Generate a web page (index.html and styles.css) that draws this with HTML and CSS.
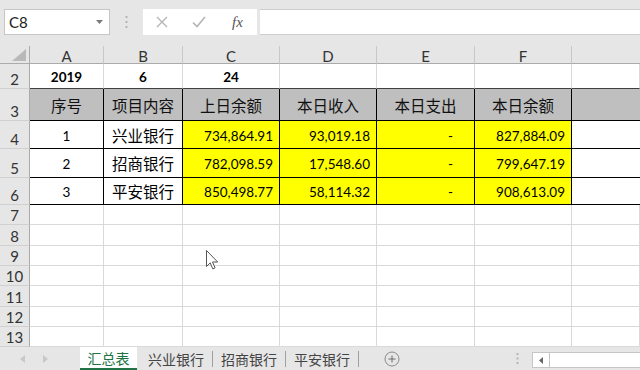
FILE: index.html
```html
<!DOCTYPE html>
<html lang="zh-CN">
  <head>
    <meta charset="UTF-8" />
    <title>汇总表</title>
    <link rel="stylesheet" href="styles.css">
  </head>
  <body>
    <div class="app">
      <!-- formula bar -->
      <div class="formula-bar">
        <div class="name-box">
          <span>C8</span>
          <svg class="caret" width="7" height="4" viewBox="0 0 7 4"><path d="M0 0h7L3.5 4z" fill="#7a7a7a"/></svg>
        </div>
        <div class="fb-dots">
          <svg width="3" height="12" viewBox="0 0 3 12"><rect x="0.5" y="0" width="2" height="2" fill="#b5b5b5"/><rect x="0.5" y="5" width="2" height="2" fill="#b5b5b5"/><rect x="0.5" y="10" width="2" height="2" fill="#b5b5b5"/></svg>
        </div>
        <div class="fb-icons">
          <svg width="12" height="12" viewBox="0 0 12 12"><path d="M1 1l10 10M11 1L1 11" stroke="#b4b4b4" stroke-width="1.3" fill="none"/></svg>
          <svg width="14" height="12" viewBox="0 0 14 12"><path d="M1 6.5l4 4L13 1" stroke="#b4b4b4" stroke-width="1.6" fill="none"/></svg>
          <span class="fx">fx</span>
        </div>
        <div class="fb-input"></div>
      </div>

      <!-- sheet grid -->
      <div class="sheet">
        <div class="corner"><svg width="14" height="12" viewBox="0 0 14 12"><path d="M14 0v12H0z" fill="#b9b9b9"/></svg></div>
        <div class="col-h">A</div>
        <div class="col-h">B</div>
        <div class="col-h">C</div>
        <div class="col-h">D</div>
        <div class="col-h">E</div>
        <div class="col-h">F</div>
        <div class="col-h last"></div>

        <div class="row-h">2</div>
        <div class="cell ctr bold top-line">2019</div>
        <div class="cell ctr bold top-line">6</div>
        <div class="cell ctr bold top-line">24</div>
        <div class="cell top-line"></div>
        <div class="cell top-line"></div>
        <div class="cell top-line"></div>
        <div class="cell top-line"></div>

        <div class="row-h">3</div>
        <div class="cell hd bx">序号</div>
        <div class="cell hd bx">项目内容</div>
        <div class="cell hd bx">上日余额</div>
        <div class="cell hd bx">本日收入</div>
        <div class="cell hd bx">本日支出</div>
        <div class="cell hd bx">本日余额</div>
        <div class="cell hd bb"></div>

        <div class="row-h">4</div>
        <div class="cell ctr bx">1</div>
        <div class="cell cn bx">兴业银行</div>
        <div class="cell num yl bx">734,864.91</div>
        <div class="cell num yl bx">93,019.18</div>
        <div class="cell dash yl bx">-</div>
        <div class="cell num yl bx">827,884.09</div>
        <div class="cell bb"></div>

        <div class="row-h">5</div>
        <div class="cell ctr bx">2</div>
        <div class="cell cn bx">招商银行</div>
        <div class="cell num yl bx">782,098.59</div>
        <div class="cell num yl bx">17,548.60</div>
        <div class="cell dash yl bx">-</div>
        <div class="cell num yl bx">799,647.19</div>
        <div class="cell bb"></div>

        <div class="row-h">6</div>
        <div class="cell ctr bx">3</div>
        <div class="cell cn bx">平安银行</div>
        <div class="cell num yl bx">850,498.77</div>
        <div class="cell num yl bx">58,114.32</div>
        <div class="cell dash yl bx">-</div>
        <div class="cell num yl bx">908,613.09</div>
        <div class="cell bb"></div>

        <div class="row-h">7</div>
        <div class="cell"></div><div class="cell"></div><div class="cell"></div><div class="cell"></div><div class="cell"></div><div class="cell"></div><div class="cell"></div>
        <div class="row-h">8</div>
        <div class="cell"></div><div class="cell"></div><div class="cell"></div><div class="cell"></div><div class="cell"></div><div class="cell"></div><div class="cell"></div>
        <div class="row-h">9</div>
        <div class="cell"></div><div class="cell"></div><div class="cell"></div><div class="cell"></div><div class="cell"></div><div class="cell"></div><div class="cell"></div>
        <div class="row-h">10</div>
        <div class="cell"></div><div class="cell"></div><div class="cell"></div><div class="cell"></div><div class="cell"></div><div class="cell"></div><div class="cell"></div>
        <div class="row-h">11</div>
        <div class="cell"></div><div class="cell"></div><div class="cell"></div><div class="cell"></div><div class="cell"></div><div class="cell"></div><div class="cell"></div>
        <div class="row-h">12</div>
        <div class="cell"></div><div class="cell"></div><div class="cell"></div><div class="cell"></div><div class="cell"></div><div class="cell"></div><div class="cell"></div>
        <div class="row-h">13</div>
        <div class="cell"></div><div class="cell"></div><div class="cell"></div><div class="cell"></div><div class="cell"></div><div class="cell"></div><div class="cell"></div>
      </div>

      <!-- sheet tabs -->
      <div class="tab-bar">
        <div class="tab-nav">
          <svg width="5" height="8" viewBox="0 0 5 8"><path d="M5 0v8L0 4z" fill="#c8c8c8"/></svg>
          <svg width="5" height="8" viewBox="0 0 5 8"><path d="M0 0v8l5-4z" fill="#c8c8c8"/></svg>
        </div>
        <div class="tab active">汇总表</div>
        <div class="tab">兴业银行</div>
        <div class="tab-sep"></div>
        <div class="tab">招商银行</div>
        <div class="tab-sep"></div>
        <div class="tab">平安银行</div>
        <div class="tab-sep"></div>
        <div class="tab-add">
          <svg width="16" height="16" viewBox="0 0 16 16"><circle cx="8" cy="8" r="7" stroke="#8a8a8a" fill="none"/><path d="M8 4.5v7M4.5 8h7" stroke="#6a6a6a"/></svg>
        </div>
        <div class="tab-dots">
          <svg width="3" height="11" viewBox="0 0 3 11"><rect x="0.5" y="0" width="2" height="2" fill="#b5b5b5"/><rect x="0.5" y="4.5" width="2" height="2" fill="#b5b5b5"/><rect x="0.5" y="9" width="2" height="2" fill="#b5b5b5"/></svg>
        </div>
        <div class="hscroll">
          <div class="hs-btn"><svg width="4" height="7" viewBox="0 0 4 7"><path d="M4 0v7L0 3.5z" fill="#666"/></svg></div>
        </div>
      </div>

      <!-- mouse pointer over the grid -->
      <svg class="pointer" width="13" height="20" viewBox="0 0 13 20">
        <path d="M0.5 0.5v16l3.7-3.6 2.6 6 2.3-1-2.6-5.9h5.2z" fill="#fff" stroke="#555" stroke-width="1"/>
      </svg>
    </div>
  </body>
</html>
```

FILE: styles.css
```css
body {
  margin: 0;
  background-color: #e6e6e6;
  font-family: Lato, "Noto Sans CJK SC", sans-serif;
  color: #000;
  overflow: hidden;
}
.app {
  position: relative;
  width: 640px;
  height: 370px;
  overflow: hidden;
  background-color: #e6e6e6;
}
.formula-bar {
  height: 46px;
  display: flex;
  align-items: flex-start;
  padding-top: 9px;
  box-sizing: border-box;
}
.name-box {
  margin-left: 4px;
  width: 106px;
  height: 26px;
  box-sizing: border-box;
  background-color: #fff;
  border: 1px solid #c6c6c6;
  display: flex;
  align-items: center;
  justify-content: space-between;
  padding: 0 6px 0 4px;
  font-size: 15px;
  color: #222;
}
.fb-dots {
  width: 33px;
  height: 26px;
  display: flex;
  align-items: center;
  justify-content: center;
}
.fb-icons {
  width: 114px;
  height: 26px;
  background-color: #fff;
  display: flex;
  align-items: center;
  gap: 24px;
  padding-left: 13px;
  box-sizing: border-box;
}
.fx {
  font-family: "Liberation Serif", serif;
  font-style: italic;
  font-size: 15px;
  color: #555;
  margin-left: 2px;
}
.fb-input {
  flex: 1;
  margin-left: 3px;
  height: 26px;
  box-sizing: border-box;
  background-color: #fff;
  border-top: 1px solid #cdcdcd;
  border-bottom: 1px solid #cdcdcd;
}
.sheet {
  display: grid;
  grid-template-columns: 30px 74px 79px 97px 97px 98px 97px 1fr;
  grid-template-rows: 18px 25px 32px 28px 29px 27px 20px 21px 20px 20px 21px 20px 20px;
  background-color: #fff;
}
.corner {
  background-color: #e6e6e6;
  border-right: 1px solid #ababab;
  border-bottom: 1px solid #ababab;
  display: flex;
  align-items: flex-end;
  justify-content: flex-end;
  padding: 0 3px 2px 0;
}
.col-h {
  background-color: #e6e6e6;
  border-bottom: 1px solid #ababab;
  border-right: 1px solid #c8c8c8;
  font-size: 15px;
  color: #333;
  display: flex;
  align-items: center;
  justify-content: center;
  padding-top: 2px;
}
.col-h.last {
  border-right: none;
}
.row-h {
  background-color: #e6e6e6;
  border-right: 1px solid #ababab;
  border-bottom: 1px solid #d0d0d0;
  font-size: 15px;
  color: #333;
  display: flex;
  align-items: flex-end;
  justify-content: center;
  padding-bottom: 0;
}
.cell,
.corner,
.col-h,
.row-h {
  box-sizing: border-box;
}
.cell {
  border-right: 1px solid #d9d9d9;
  border-bottom: 1px solid #d9d9d9;
  display: flex;
  align-items: center;
  font-size: 13.5px;
  padding-top: 2px;
  white-space: nowrap;
}
.ctr {
  justify-content: center;
}
.bold {
  font-weight: 700;
}
.top-line {
  border-bottom-color: #404040;
}
.hd {
  background-color: #bfbfbf;
  justify-content: center;
  font-family: "Noto Sans CJK SC", sans-serif;
  font-size: 15.5px;
  color: #111;
  padding-top: 0;
}
.cn {
  justify-content: center;
  font-family: "Noto Sans CJK SC", sans-serif;
  font-size: 15.5px;
  padding-top: 0;
}
.num {
  justify-content: flex-end;
  padding-right: 6px;
}
.dash {
  justify-content: flex-end;
  padding-right: 21px;
}
.yl {
  background-color: #ffff00;
}
.bx {
  border-right-color: #000;
  border-bottom-color: #000;
}
.bb {
  border-bottom-color: #000;
  border-right: none;
}
.tab-bar {
  height: 23px;
  display: flex;
  align-items: stretch;
  font-family: "Noto Sans CJK SC", sans-serif;
  font-size: 14px;
  color: #444;
}
.tab-nav {
  width: 80px;
  display: flex;
  align-items: center;
  gap: 18px;
  padding-left: 20px;
  box-sizing: border-box;
}
.tab {
  display: flex;
  align-items: center;
  padding: 0 8px;
  line-height: 1;
}
.tab.active {
  background-color: #fff;
  color: #217346;
  width: 57px;
  box-sizing: border-box;
  justify-content: center;
  border-bottom: 2px solid #217346;
  margin-right: 3px;
  padding: 0;
}
.tab-sep {
  width: 1px;
  background-color: #a0a0a0;
  margin: 4px 0 3px;
}
.tab-add {
  width: 66px;
  display: flex;
  align-items: center;
  justify-content: center;
}
.tab-dots {
  width: 107px;
  display: flex;
  align-items: center;
  justify-content: flex-end;
  padding-right: 13px;
  box-sizing: border-box;
}
.hscroll {
  flex: 1;
  margin: 5px 0 2px;
  background-color: #fff;
  border: 1px solid #c6c6c6;
  border-right: none;
  display: flex;
}
.hs-btn {
  width: 16px;
  border-right: 1px solid #c6c6c6;
  display: flex;
  align-items: center;
  justify-content: center;
}
.pointer {
  position: absolute;
  left: 206px;
  top: 250px;
}
```
